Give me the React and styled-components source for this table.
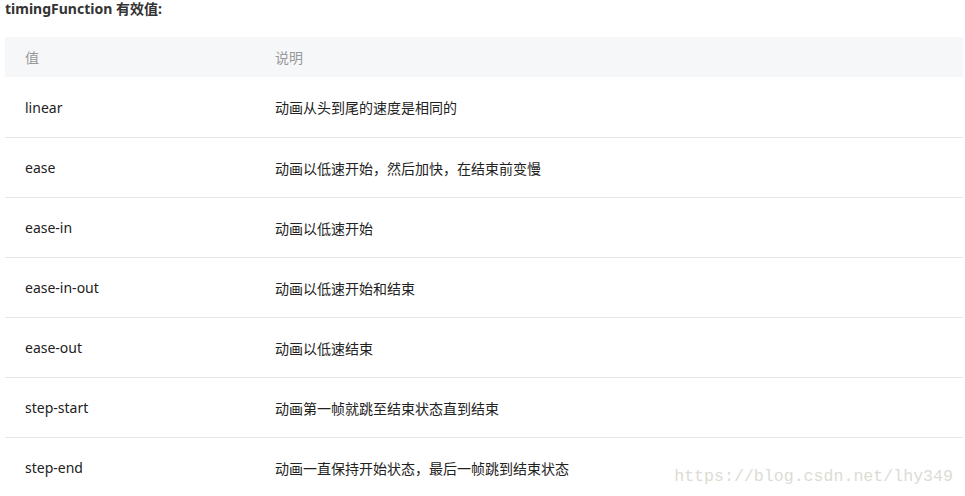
import React from 'react'
import styled, { createGlobalStyle } from 'styled-components'

const Global = createGlobalStyle`
  body {
    margin: 0;
    background: #fff;
    font-family: "Noto Sans", "Noto Sans CJK SC", sans-serif;
  }
`

const Page = styled.div`
  position: relative;
  width: 965px;
  height: 496px;
  overflow: hidden;
  padding: 0 2px 0 5px;
  box-sizing: border-box;
`

const Title = styled.div`
  font-size: 14px;
  font-weight: bold;
  color: #333;
  height: 37px;
  line-height: 18px;
  padding-top: 0;
  margin-top: 0;
`

const Table = styled.div`
  display: grid;
  grid-template-columns: 250px 1fr;
`

const HeadCell = styled.div`
  background: #f6f7f9;
  height: 40px;
  display: flex;
  align-items: center;
  padding-left: 20px;
  font-size: 14px;
  color: #999;
`

const Cell = styled.div`
  height: 60px;
  box-sizing: border-box;
  display: flex;
  align-items: center;
  padding-left: 20px;
  font-size: 14px;
  color: #222;
  border-top: ${(p) => (p.first ? 'none' : '1px solid #e6e6e6')};
`

const Watermark = styled.div`
  position: absolute;
  right: 12px;
  bottom: 10px;
  font-family: "Liberation Mono", monospace;
  font-size: 16.6px;
  color: #dcdcd4;
`

const rows = [
  ['linear', '动画从头到尾的速度是相同的'],
  ['ease', '动画以低速开始，然后加快，在结束前变慢'],
  ['ease-in', '动画以低速开始'],
  ['ease-in-out', '动画以低速开始和结束'],
  ['ease-out', '动画以低速结束'],
  ['step-start', '动画第一帧就跳至结束状态直到结束'],
  ['step-end', '动画一直保持开始状态，最后一帧跳到结束状态'],
]

export default function App() {
  return (
    <Page>
      <Global />
      <Title>timingFunction 有效值:</Title>
      <Table>
        <HeadCell>值</HeadCell>
        <HeadCell>说明</HeadCell>
        {rows.map(([v, d], i) => (
          <React.Fragment key={v}>
            <Cell first={i === 0}>{v}</Cell>
            <Cell first={i === 0}>{d}</Cell>
          </React.Fragment>
        ))}
      </Table>
      <Watermark>https://blog.csdn.net/lhy349</Watermark>
    </Page>
  )
}
